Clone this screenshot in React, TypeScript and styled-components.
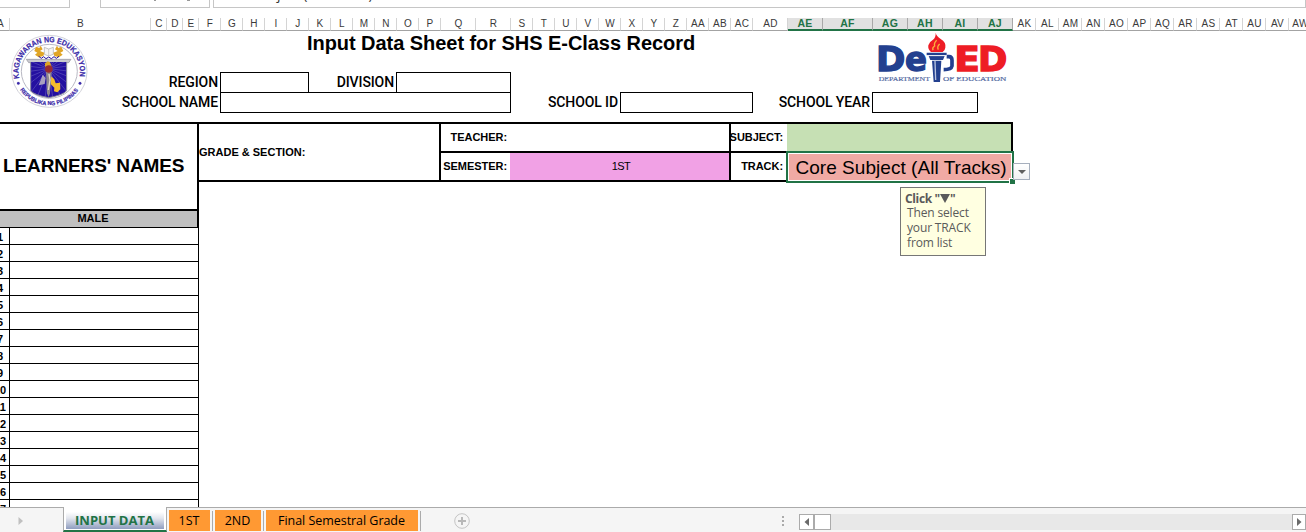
import React from "react";
import styled, { createGlobalStyle, css } from "styled-components";

const GREEN = "#217346";

const Global = createGlobalStyle`
  * { box-sizing: border-box; }
  body { margin: 0; background: #fff; font-family: "Liberation Sans", Arial, sans-serif; color: #000; overflow: hidden; }
  svg { display: block; }
`;

const Window = styled.div`
  width: 1306px;
  height: 532px;
  display: flex;
  flex-direction: column;
  overflow: hidden;
  background: #fff;
  white-space: nowrap;
`;

/* formula bar */
const FormulaBar = styled.div`
  display: flex;
  flex: none;
  height: 18px;
  align-items: flex-start;
`;
const FormulaBox = styled.div<{ $w?: number; $ml?: number; $noLeft?: boolean }>`
  height: 8px;
  ${(p) => (p.$w ? `width: ${p.$w}px; flex: none;` : "flex: 1;")}
  margin-left: ${(p) => p.$ml ?? 0}px;
  border: 1px solid #c6c6c6;
  border-top: 0;
  ${(p) => p.$noLeft && "border-left: 0;"}
  overflow: hidden;
  display: flex;
  align-items: flex-end;
  padding-left: 4px;
`;
const FormulaText = styled.span`
  font: 14px/18px "Open Sans", sans-serif;
  letter-spacing: -0.05px;
  color: #333;
  margin-bottom: 4px;
`;
const FormulaTools = styled.svg`
  margin: 0 0 3px 48px;
`;

/* column headers */
const HeaderRow = styled.div`
  display: flex;
  flex: none;
  height: 13px;
`;
const HeaderCell = styled.div<{ $w: number; $on: boolean }>`
  width: ${(p) => p.$w}px;
  flex: none;
  height: 13px;
  border-right: 1px solid #d4d4d4;
  border-bottom: 1px solid #a3a3a3;
  font-size: 10px;
  line-height: 12px;
  letter-spacing: 0.3px;
  padding-left: 1px;
  color: #3a3a3a;
  display: flex;
  justify-content: center;
  &:first-child {
    padding: 0 8px 0 0;
  }
  ${(p) =>
    p.$on &&
    css`
      background: #e1e1e1;
      border-right-color: #a8a8a8;
      border-bottom: 2px solid ${GREEN};
      color: ${GREEN};
      font-weight: bold;
      font-size: 10.5px;
      line-height: 11px;
      padding-left: 0;
    `}
`;

/* heading form */
const FormArea = styled.div`
  display: grid;
  flex: none;
  height: 91px;
  grid-template-columns: 98px 777px 1fr;
  grid-template-rows: 25px 16px 20px 21px;
`;
const SealSlot = styled.div`
  grid-area: 1 / 1 / 5 / 2;
  padding: 2px 0 0 10px;
`;
const LogoSlot = styled.div`
  grid-area: 1 / 3 / 4 / 4;
`;
const Title = styled.h1`
  grid-area: 1 / 2 / 2 / 3;
  margin: 0;
  padding-left: 209px;
  font-size: 20px;
  line-height: 25px;
  font-weight: bold;
  letter-spacing: -0.05px;
`;
const FormRow = styled.div<{ $row: number }>`
  grid-row: ${(p) => p.$row};
  grid-column: 2 / 4;
  display: flex;
  width: 880px;
`;
const FormLabel = styled.label<{ $w: number }>`
  width: ${(p) => p.$w}px;
  padding-right: 2px;
  text-align: right;
  font: 500 14px/20px Roboto, sans-serif;
  letter-spacing: -0.1px;
`;
const FormField = styled.div<{ $w: number; $open?: boolean }>`
  width: ${(p) => p.$w}px;
  border: 1px solid #000;
  ${(p) => p.$open && "border-bottom: 0;"}
`;

/* grid body */
const Body = styled.div`
  display: flex;
  flex: 1;
  min-height: 0;
  align-items: flex-start;
  overflow: hidden;
`;
const Learners = styled.div`
  width: 199px;
  flex: none;
`;
const LearnersHead = styled.div`
  height: 87px;
  border-top: 2px solid #000;
  border-right: 2px solid #000;
  display: flex;
  align-items: center;
  padding: 0 0 1px 3px;
  font-size: 19px;
  letter-spacing: -0.1px;
  font-weight: bold;
`;
const GroupHead = styled.div`
  height: 19px;
  border: solid #000;
  border-width: 2px 2px 1px 0;
  background: #c0c0c0;
  font-size: 11px;
  line-height: 14px;
  font-weight: bold;
  padding-right: 11px;
  text-align: center;
`;
const LearnerRow = styled.div`
  display: flex;
  height: 17px;
  border-bottom: 1px solid #000;
  border-right: 1px solid #000;
`;
const NumberCell = styled.div`
  width: 10px;
  border-right: 1px solid #000;
  overflow: hidden;
  font-size: 11px;
  line-height: 18px;
  font-weight: bold;
`;
const Num = styled.span`
  display: block;
  width: 18px;
  margin-left: -9px;
  text-align: center;
`;

const InfoTable = styled.div`
  display: flex;
  width: 814px;
  height: 60px;
  border: solid #000;
  border-width: 2px 2px 2px 0;
  font-size: 11px;
  font-weight: bold;
`;
const GradeCell = styled.div`
  width: 240px;
  line-height: 56px;
`;
const InfoGroup = styled.div<{ $w: number }>`
  width: ${(p) => p.$w}px;
  border-left: 2px solid #000;
`;
const InfoRow = styled.div<{ $first?: boolean }>`
  display: flex;
  height: ${(p) => (p.$first ? 29 : 27)}px;
  ${(p) => p.$first && "border-bottom: 2px solid #000;"}
`;
const InfoLabel = styled.div<{ $w: number; $pr?: number }>`
  width: ${(p) => p.$w}px;
  flex: none;
  padding-right: ${(p) => p.$pr ?? 3}px;
  display: flex;
  justify-content: flex-end;
  line-height: 27px;
  letter-spacing: -0.05px;
`;
const InfoValue = styled.div<{ $bg?: string }>`
  flex: 1;
  position: relative;
  background: ${(p) => p.$bg ?? "transparent"};
  font-weight: normal;
  text-align: center;
  line-height: 27px;
  letter-spacing: -0.6px;
  padding-left: 3px;
`;
const ActiveCell = styled.div`
  position: absolute;
  left: -1px;
  top: -2px;
  width: 228px;
  height: 32px;
  border: 2px solid ${GREEN};
  background: #f0aaa4;
  box-shadow: inset 0 0 0 1px #fff;
  font-size: 19px;
  line-height: 29px;
  padding-left: 2px;
  letter-spacing: 0.04px;
`;
const FillHandle = styled.div`
  position: absolute;
  right: -3px;
  bottom: -3px;
  width: 6px;
  height: 6px;
  background: ${GREEN};
  border: solid #fff;
  border-width: 1px 0 0 1px;
`;
const DropButton = styled.div`
  position: absolute;
  left: 226px;
  top: 10px;
  width: 17px;
  height: 17px;
  border: 1px solid #a6afbd;
  background: linear-gradient(#fff, #f0f1f3);
  display: flex;
  align-items: center;
  justify-content: center;
`;
const Hint = styled.div`
  position: absolute;
  left: 113px;
  top: 34px;
  width: 86px;
  height: 69px;
  border: 1px solid #767676;
  background: #ffffe1;
  color: #5a5a5a;
  font: 12px/15px "Open Sans", sans-serif;
  letter-spacing: -0.15px;
  text-align: left;
  padding: 4px 0 0 6px;
`;
const HintTitle = styled.div`
  margin-left: -2px;
  line-height: 13px;
  font-weight: bold;
  letter-spacing: -0.35px;
  display: flex;
  align-items: center;
`;

/* sheet tabs */
const TabBar = styled.div`
  display: flex;
  flex: none;
  height: 25px;
  background: #f5f5f5;
`;
const Strip = styled.div<{ $w?: number }>`
  ${(p) => (p.$w ? `width: ${p.$w}px; flex: none;` : "flex: 1;")}
  border-top: 1px solid #ababab;
  display: flex;
`;
const ActiveTab = styled.div`
  width: 104px;
  flex: none;
  background: #fff;
  border: solid #ababab;
  border-width: 0 1px;
  border-bottom: 2px solid ${GREEN};
  padding: 4px 2px 1px;
`;
const ActiveTabFace = styled.div`
  height: 18px;
  background: linear-gradient(#fff 5%, #e3e6ee 40%, #8f9dbf);
  color: ${GREEN};
  font: bold 13px/18px "Open Sans", sans-serif;
  letter-spacing: 0;
  padding-right: 1px;
  text-align: center;
`;
const Tab = styled.div<{ $w: number }>`
  width: ${(p) => p.$w}px;
  flex: none;
  margin: 2px 2px 0;
  padding-right: 1px;
  height: 21px;
  background: #ff9933;
  font: 12.5px/21px "Open Sans", sans-serif;
  letter-spacing: -0.04px;
  text-align: center;
`;
const TabSep = styled.div`
  width: 1px;
  height: 20px;
  margin-top: 3px;
  background: #ababab;
`;
const AddIcon = styled.svg`
  margin: 5px 0 0 33px;
`;
const Grip = styled.div`
  display: flex;
  flex-direction: column;
  gap: 2px;
  margin: 8px 15px 0 auto;
  i { width: 2px; height: 2px; background: #aaa; }
`;
const ScrollTrack = styled.div`
  display: flex;
  width: 507px;
  height: 16px;
  margin-top: 6px;
  background: #e8e8e8;
`;
const ScrollPart = styled.div<{ $w: number; $end?: boolean }>`
  width: ${(p) => p.$w}px;
  flex: none;
  height: 16px;
  border: 1px solid #ababab;
  background: #fff;
  margin-left: ${(p) => (p.$end ? "auto" : 0)};
  display: flex;
  align-items: center;
  justify-content: center;
`;
const NavArrow = styled.svg`
  margin: 9px 0 0 18px;
`;

const columns: [string, number][] = [
  ["A", 10], ["B", 141], ["C", 16], ["D", 16], ["E", 16],
  ...("FGHIJKLMNOP".split("").map((c) => [c, 22]) as [string, number][]),
  ["Q", 35], ["R", 35],
  ...(["S", "T", "U", "V", "W", "X", "Y", "Z", "AA", "AB", "AC"].map((c) => [c, 22]) as [string, number][]),
  ["AD", 35], ["AE", 35], ["AF", 50], ["AG", 35], ["AH", 35], ["AI", 35], ["AJ", 35],
  ...(["AK", "AL", "AM", "AN", "AO", "AP", "AQ", "AR", "AS", "AT", "AU", "AV", "AW"].map((c) => [c, 23]) as [string, number][]),
];
const selected = ["AE", "AF", "AG", "AH", "AI", "AJ"];

const rays = Array.from({ length: 24 }, (_, i) => {
  const a = (i * 15 + 7) * (Math.PI / 180);
  return `M146 206L${146 + 100 * Math.cos(a)} ${206 + 100 * Math.sin(a)}`;
}).join("");

const Seal = () => (
  <svg width="80" height="76" viewBox="30 99 240 228">
    <defs>
      <path id="sealTop" d="M59 238A92 89 0 1 1 237 238" />
      <path id="sealBottom" d="M60 269A104 101 0 0 0 236 269" />
      <clipPath id="shield">
        <path d="M92 186H200V272Q190 285 146 293Q102 285 92 272Z" />
      </clipPath>
    </defs>
    <ellipse cx="148" cy="214" rx="113" ry="108" fill="#fff" stroke="#d2d2da" strokeWidth="3" />
    <ellipse cx="148" cy="214" rx="84" ry="81" fill="#fff" stroke="#b9b9c4" strokeWidth="3" />
    <g fill="#3a2aa8" stroke="#3a2aa8" strokeWidth="0.6" fontFamily="Liberation Sans, Arial, sans-serif" fontWeight="bold">
      <text fontSize="23">
        <textPath href="#sealTop" startOffset="3" textLength="318" lengthAdjust="spacingAndGlyphs">KAGAWARAN NG EDUKASYON</textPath>
      </text>
      <text fontSize="17">
        <textPath href="#sealBottom" textLength="206" lengthAdjust="spacingAndGlyphs">REPUBLIKA NG PILIPINAS</textPath>
      </text>
      <circle cx="55" cy="250" r="4" />
      <circle cx="240" cy="250" r="4" />
    </g>
    <path d="M79 178H213L206 188H86Z" fill="#c9c9cf" stroke="#8e8e98" strokeWidth="2" />
    <g clipPath="url(#shield)">
      <rect x="88" y="184" width="116" height="112" fill="#2410a0" />
      <path d={rays} stroke="#7a70c8" strokeWidth="1.4" />
    </g>
    <path d="M92 187V272Q102 285 146 293Q190 285 200 272V187" fill="none" stroke="#84849a" strokeWidth="3" />
    <path d="M133 142L146 147L160 142V163L146 168L133 163Z" fill="#f4f4f4" stroke="#aaa" strokeWidth="2" />
    <path d="M146 147V168" stroke="#bbb" strokeWidth="2" />
    <g fill="#e0a526">
      <path d="M108 140L118 144L122 137L128 148L120 153L133 158L130 168L116 172L105 164L112 158L103 153Z" />
      <path d="M184 140L175 144L171 137L165 148L173 153L160 158L163 168L177 172L188 164L181 158L190 153Z" />
      <path d="M135 200V190L143 184L150 187L155 200Z" />
      <path d="M152 227L163 238L167 250L180 248L181 268L172 277L162 274L163 263L152 252Z" fill="#f5bd2c" />
    </g>
    <path d="M116 169L124 175L131 170L138 176L146 171L154 176L162 170L169 175L177 169" fill="none" stroke="#2410a0" strokeWidth="3" />
    <path d="M138 216H155L150 280L146 291L141 280Z" fill="#8d8790" />
    <path d="M128 224L137 234L134 252L116 256Z" fill="#a9a0c0" />
    <circle cx="146.500" cy="207" r="11.500" fill="#9a2c30" />
    <path d="M147 222L150 240L145 270" fill="none" stroke="#e4d7c6" strokeWidth="4" />
  </svg>
);

const DepEdLogo = () => (
  <svg width="136" height="61" viewBox="285 93 408 183">
    <g fontFamily="DejaVu Sans, sans-serif" fontWeight="bold" fontSize="102">
      <text x="288" y="214" fill="#23408f" stroke="#23408f" strokeWidth="4" textLength="88" lengthAdjust="spacingAndGlyphs">D</text>
      <text x="375" y="214" fill="#23408f" stroke="#23408f" strokeWidth="4" textLength="66" lengthAdjust="spacingAndGlyphs">e</text>
      <text x="523" y="214" fill="#ee1c25" stroke="#ee1c25" strokeWidth="4" textLength="77" lengthAdjust="spacingAndGlyphs">E</text>
      <text x="594" y="214" fill="#ee1c25" stroke="#ee1c25" strokeWidth="4" textLength="88" lengthAdjust="spacingAndGlyphs">D</text>
    </g>
    <path d="M500 170H507Q516 170 516 181V198Q514 209 491 209" fill="none" stroke="#23408f" strokeWidth="11" />
    <path d="M440 158H500V166H440ZM446 168H494L489 180H451ZM456 182H484L480 246H461Z" fill="#23408f" />
    <path d="M465 183L467 240" stroke="#b9c4e2" strokeWidth="4" />
    <path d="M440 167H500" stroke="#fff" strokeWidth="2" />
    <path d="M467 98Q469 108 482 117Q499 127 496 143Q495 151 488 156H453Q443 148 445 136Q447 126 458 120Q468 112 467 98Z" fill="#ee1c25" />
    <path d="M470 121Q461 130 464 138Q456 142 459 151M479 132Q470 140 475 149" fill="none" stroke="#fbb03b" strokeWidth="4" />
    <g fill="#52699f" fontFamily="Liberation Serif, serif" fontSize="19" stroke="#52699f" strokeWidth=".5">
      <text x="296" y="243" textLength="154" lengthAdjust="spacingAndGlyphs">DEPARTMENT</text>
      <text x="489" y="243" textLength="190" lengthAdjust="spacingAndGlyphs">OF EDUCATION</text>
    </g>
  </svg>
);

export default function App() {
  return (
    <Window>
      <Global />
      <FormulaBar>
        <FormulaBox $w={70} $noLeft />
        <FormulaBox $w={110} $ml={30}>
          <FormulaTools width="50" height="4" viewBox="0 0 50 4">
            <path d="M1 0H3M34 0H37" stroke="#999" strokeWidth="2" />
          </FormulaTools>
        </FormulaBox>
        <FormulaBox $ml={3}>
          <FormulaText>Core Subject (All Tracks)</FormulaText>
        </FormulaBox>
      </FormulaBar>

      <HeaderRow>
        {columns.map(([name, w]) => (
          <HeaderCell key={name} $w={w} $on={selected.includes(name)}>
            {name}
          </HeaderCell>
        ))}
      </HeaderRow>

      <FormArea>
        <SealSlot><Seal /></SealSlot>
        <Title>Input Data Sheet for SHS E-Class Record</Title>
        <LogoSlot><DepEdLogo /></LogoSlot>
        <FormRow $row={3}>
          <FormLabel $w={122}>REGION</FormLabel>
          <FormField $w={89} $open />
          <FormLabel $w={87}>DIVISION</FormLabel>
          <FormField $w={115} $open />
        </FormRow>
        <FormRow $row={4}>
          <FormLabel $w={122}>SCHOOL NAME</FormLabel>
          <FormField $w={291} />
          <FormLabel $w={109}>SCHOOL ID</FormLabel>
          <FormField $w={133} />
          <FormLabel $w={119}>SCHOOL YEAR</FormLabel>
          <FormField $w={106} />
        </FormRow>
      </FormArea>

      <Body>
        <Learners>
          <LearnersHead>LEARNERS' NAMES</LearnersHead>
          <GroupHead>MALE</GroupHead>
          {Array.from({ length: 17 }, (_, i) => (
            <LearnerRow key={i}>
              <NumberCell><Num>{i + 1}</Num></NumberCell>
            </LearnerRow>
          ))}
        </Learners>
        <InfoTable>
          <GradeCell>GRADE &amp; SECTION:</GradeCell>
          <InfoGroup $w={290}>
            <InfoRow $first>
              <InfoLabel $w={69}>TEACHER:</InfoLabel>
              <InfoValue />
            </InfoRow>
            <InfoRow>
              <InfoLabel $w={69}>SEMESTER:</InfoLabel>
              <InfoValue $bg="#f1a1e5">1ST</InfoValue>
            </InfoRow>
          </InfoGroup>
          <InfoGroup $w={282}>
            <InfoRow $first>
              <InfoLabel $w={56} $pr={4}>SUBJECT:</InfoLabel>
              <InfoValue $bg="#c6e0b4" />
            </InfoRow>
            <InfoRow>
              <InfoLabel $w={56} $pr={4}>TRACK:</InfoLabel>
              <InfoValue>
                <ActiveCell>
                  Core Subject (All Tracks)
                  <FillHandle />
                </ActiveCell>
                <DropButton>
                  <svg width="8" height="4" viewBox="0 0 8 4"><path d="M0 0H8L4 4Z" fill="#606060" /></svg>
                </DropButton>
                <Hint>
                  <HintTitle>Click "<svg width="10" height="9" viewBox="0 0 10 9"><path d="M0 0H10L5 9Z" fill="#5a5a5a" /></svg>"</HintTitle>
                  <div>Then select</div>
                  <div>your TRACK</div>
                  <div>from list</div>
                </Hint>
              </InfoValue>
            </InfoRow>
          </InfoGroup>
        </InfoTable>
      </Body>

      <TabBar>
        <Strip $w={63}>
          <NavArrow width="5" height="8" viewBox="0 0 5 8"><path d="M0.500 0L5 4L0.500 8Z" fill="#c0c0c0" /></NavArrow>
        </Strip>
        <ActiveTab><ActiveTabFace>INPUT DATA</ActiveTabFace></ActiveTab>
        <Strip>
          <Tab $w={41}>1ST</Tab>
          <TabSep />
          <Tab $w={46}>2ND</Tab>
          <TabSep />
          <Tab $w={152}>Final Semestral Grade</Tab>
          <TabSep />
          <AddIcon width="16" height="16" viewBox="0 0 16 16">
            <circle cx="8" cy="8" r="7.300" fill="none" stroke="#c4c4c4" />
            <path d="M8 4V12M4 8H12" stroke="#b8b8b8" strokeWidth="2" />
          </AddIcon>
          <Grip><i /><i /><i /></Grip>
          <ScrollTrack>
            <ScrollPart $w={15}>
              <svg width="5" height="8" viewBox="0 0 5 8"><path d="M5 0V8L0.500 4Z" fill="#6a6a6a" /></svg>
            </ScrollPart>
            <ScrollPart $w={17} />
            <ScrollPart $w={14} $end>
              <svg width="5" height="8" viewBox="0 0 5 8"><path d="M0 0V8L4.500 4Z" fill="#6a6a6a" /></svg>
            </ScrollPart>
          </ScrollTrack>
        </Strip>
      </TabBar>
    </Window>
  );
}
